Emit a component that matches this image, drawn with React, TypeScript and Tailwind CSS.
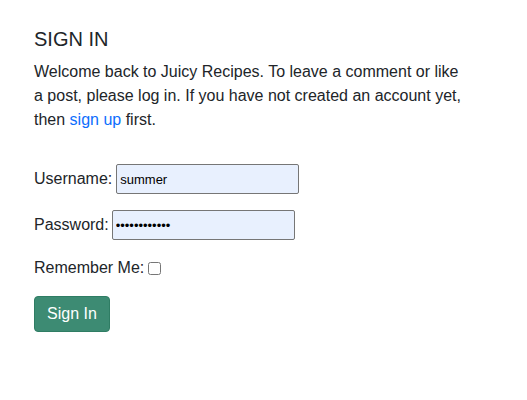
export default function App() {
  return (
    <div className="min-h-[400px] w-full bg-white px-[34px] pt-[27px] font-['Liberation_Sans',Arial,sans-serif] text-[16px] leading-[24px] text-[#212529]">
      <h3 className="mb-[9px] text-[20px] leading-[24px] font-medium">SIGN IN</h3>
      <p className="w-[460px]">
        Welcome back to Juicy Recipes. To leave a comment or like
        <br />
        a post, please log in. If you have not created an account yet,
        <br />
        then{' '}
        <a href="#" className="text-[#0d6efd] no-underline">
          sign up
        </a>{' '}
        first.
      </p>

      <form className="mt-8 flex flex-col gap-4" onSubmit={(e) => e.preventDefault()}>
        <div className="flex h-[30px] items-center gap-1">
          <label htmlFor="id_login">Username:</label>
          <input
            id="id_login"
            type="text"
            defaultValue="summer"
            className="h-[30px] w-[183px] rounded-[2px] border border-[#767676] bg-[#e8f0fe] px-[3px] font-['Liberation_Sans',Arial,sans-serif] text-[13px] text-black outline-none"
          />
        </div>
        <div className="flex h-[30px] items-center gap-[3px]">
          <label htmlFor="id_password">Password:</label>
          <input
            id="id_password"
            type="password"
            defaultValue="summer123456"
            className="h-[30px] w-[183px] rounded-[2px] border border-[#767676] bg-[#e8f0fe] px-[3px] text-[13px] text-black outline-none"
          />
        </div>
        <div className="flex h-6 items-center gap-1">
          <label htmlFor="id_remember">Remember Me:</label>
          <input id="id_remember" type="checkbox" className="m-0 h-[13px] w-[13px]" />
        </div>
        <div>
          <button
            type="submit"
            className="h-9 rounded-[4px] border border-[#2f7d64] bg-[#3d8b73] px-3 text-[16px] leading-[24px] text-white"
          >
            Sign In
          </button>
        </div>
      </form>
    </div>
  )
}
